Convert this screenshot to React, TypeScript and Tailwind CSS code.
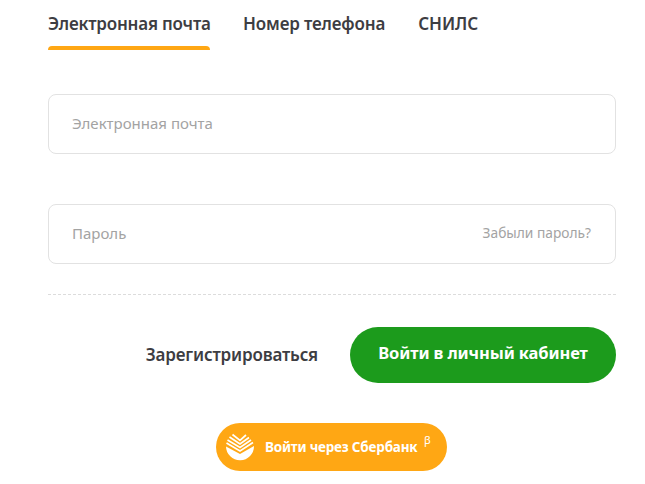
export default function App() {
  return (
    <div className="w-[645px] h-[484px] overflow-hidden bg-white pl-[48px] pr-[29px] font-['Noto_Sans',sans-serif]">
      <div className="flex h-[50px] text-[17px] font-semibold text-[#3d3d42]">
        <div className="relative w-[162px] pt-[11px] leading-[26px] whitespace-nowrap tracking-[-0.2px]">
          Электронная почта
          <div className="absolute left-0 right-0 bottom-0 h-[4px] bg-[#ffa714] rounded-t-[4px]" />
        </div>
        <div className="ml-[33px] pt-[11px] leading-[26px] whitespace-nowrap tracking-[-0.15px]">Номер телефона</div>
        <div className="ml-[33px] pt-[11px] leading-[26px] whitespace-nowrap tracking-[-0.05px]">СНИЛС</div>
      </div>
      <div className="mt-[44px] h-[60px] border border-[#e2e2e2] rounded-[8px] flex items-center px-[23px] pb-[2px] text-[15px] text-[#a3a3a3]">
        Электронная почта
      </div>
      <div className="mt-[50px] h-[60px] border border-[#e2e2e2] rounded-[8px] flex items-center justify-between pl-[23px] pr-[24px] pb-[2px] text-[15px] text-[#a3a3a3]">
        <span>Пароль</span>
        <span className="text-[13.75px]">Забыли пароль?</span>
      </div>
      <div className="mt-[30px] border-t border-dashed border-[#dcdcdc]" />
      <div className="mt-[32px] flex items-center justify-end gap-[32px]">
        <span className="text-[17px] font-semibold text-[#3d3d42] tracking-[-0.17px]">Зарегистрироваться</span>
        <button className="w-[266px] h-[56px] rounded-[28px] bg-[#1c9b1c] text-white text-[16.5px] font-bold tracking-[-0.12px] pb-[3px]">
          Войти в личный кабинет
        </button>
      </div>
      <div className="mt-[40px] ml-[168px]">
        <button className="relative w-[231px] h-[48px] rounded-[24px] bg-[#ffa714] text-white text-[13.5px] font-bold flex items-center pl-[10px] tracking-[-0.2px]">
          <svg width="28" height="30" viewBox="0 0 28 30" className="shrink-0">
            <path d="M0 14.5 L14 22 L28 14 A14 14 0 1 1 0 14.5 Z" fill="#fff" />
            <path d="M0.5 11 L14 19 L27 10.5" fill="none" stroke="#fff" strokeWidth="1.7" />
            <path d="M1.5 8 L14 15.5 L25 8" fill="none" stroke="#fff" strokeWidth="1.7" />
            <path d="M3.5 5 L14 12 L23 5.5" fill="none" stroke="#fff" strokeWidth="1.7" />
            <path d="M6.5 2.5 L14 8.5 L20 3" fill="none" stroke="#fff" strokeWidth="1.7" />
          </svg>
          <span className="ml-[11px] whitespace-nowrap">Войти через Сбербанк</span>
          <span className="absolute left-[208px] top-[9px] text-[11px] font-normal">β</span>
        </button>
      </div>
    </div>
  );
}
